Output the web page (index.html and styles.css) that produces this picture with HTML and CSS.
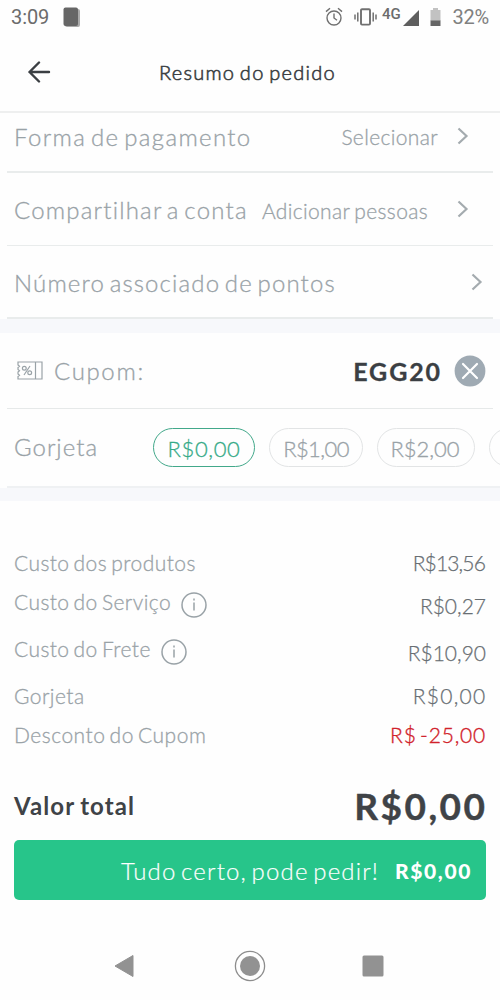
FILE: index.html
```html
<!DOCTYPE html>
<html lang="pt-BR">
<head>
<meta charset="utf-8">
<meta name="viewport" content="width=device-width, initial-scale=1">
<title>Resumo do pedido</title>
<link rel="stylesheet" href="styles.css">
</head>
<body>
<div class="status">
  <span class="clock">3:09</span>
  <svg class="card" width="18" height="21" viewBox="0 0 18 21"><rect x="2" y="2" width="15" height="18" rx="2" fill="#aaa"/><rect x="0.5" y="0.5" width="14.5" height="18.5" rx="2" fill="#666"/></svg>
  <svg class="alarm" width="18" height="20" viewBox="0 0 18 20" fill="none" stroke="#707070" stroke-width="1.4"><circle cx="9" cy="11" r="7"/><path d="M9 6.5V11l3 2.3M1 4.6 5 1.2M17 4.6 13 1.2"/></svg>
  <svg class="vibrate" width="23" height="18" viewBox="0 0 23 18" fill="none" stroke="#707070" stroke-width="1.5"><rect x="7" y="1.2" width="9" height="15.4" rx="1" stroke-width="1.9"/><path d="M1 6.5v5M3.8 4.5v9M19.2 4.5v9M22 6.5v5"/></svg>
  <span class="network">4G</span>
  <svg class="signal" width="16" height="16" viewBox="0 0 16 16"><path d="M16 0v16H0z" fill="#5e5e5e"/></svg>
  <svg class="battery" width="11" height="18" viewBox="0 0 11 18"><path d="M3 0h5v2h2.500v11H.5V2H3z" fill="#c2c2c2"/><path d="M.5 12.500h10V18H.5z" fill="#666"/></svg>
  <span class="percent">32%</span>
</div>
<header class="header">
  <svg class="back" width="23" height="22" viewBox="0 0 23 22" fill="none" stroke="#3b3f43" stroke-width="2.400" stroke-linecap="round" stroke-linejoin="round"><path d="M21 11H1.500M11 1.500 1.500 11l9.500 9.500"/></svg>
  <h1 class="title">Resumo do pedido</h1>
</header>
<main>
  <section class="options">
    <div class="option option-pay"><span class="name n-pay">Forma de pagamento</span><span class="hint h-pay">Selecionar</span><svg class="chev" width="12" height="18" viewBox="0 0 12 18"><path d="M1.500 1.500 9.500 9l-8 7.500"/></svg></div>
    <div class="option option-share"><span class="name n-share">Compartilhar a conta</span><span class="hint h-share">Adicionar pessoas</span><svg class="chev" width="12" height="18" viewBox="0 0 12 18"><path d="M1.500 1.500 9.500 9l-8 7.500"/></svg></div>
    <div class="option option-points"><span class="name n-points">Número associado de pontos</span><svg class="chev chev-end" width="12" height="18" viewBox="0 0 12 18"><path d="M1.500 1.500 9.500 9l-8 7.500"/></svg></div>
  </section>
  <div class="band"></div>
  <section class="coupon">
    <svg class="ticket" width="26" height="19" viewBox="0 0 26 19" fill="none" stroke="#99a2a7" stroke-width="1.200"><path d="M1 1h24v17H1v-2.500l1.500-1.200L1 13v-2l1.500-1.200L1 8.500v-2l1.500-1.200L1 4zM18.500 1v17"/><circle cx="7.300" cy="7.300" r="1.900"/><circle cx="12.700" cy="11.700" r="1.900"/><path d="M13 5 7 14"/></svg>
    <span class="name n-coupon">Cupom:</span>
    <span class="code">EGG20</span>
    <svg class="remove" width="32" height="32" viewBox="0 0 32 32"><circle cx="16" cy="16" r="15.400" fill="#9faab3"/><path d="m9 9 14 14M23 9 9 23" fill="none" stroke="#fff" stroke-width="2.200" stroke-linecap="round"/></svg>
  </section>
  <section class="tip">
    <span class="name n-tip">Gorjeta</span>
    <div class="pills"><span class="pill pill-on">R$0,00</span><span class="pill pill-one">R$1,00</span><span class="pill pill-two">R$2,00</span><span class="pill pill-more"></span></div>
  </section>
  <div class="band band-low"></div>
  <section class="costs">
    <div class="cost"><span class="label l-prod">Custo dos produtos</span><span class="value v-prod">R$13,56</span></div>
    <div class="cost cost-serv"><span class="label l-serv">Custo do Serviço</span><svg class="info" width="26" height="26" viewBox="0 0 26 26"><circle cx="13" cy="13" r="12"/><path d="M13 10.500v8M13 6.500v2"/></svg><span class="value v-serv">R$0,27</span></div>
    <div class="cost cost-ship"><span class="label l-ship">Custo do Frete</span><svg class="info" width="26" height="26" viewBox="0 0 26 26"><circle cx="13" cy="13" r="12"/><path d="M13 10.500v8M13 6.500v2"/></svg><span class="value v-ship">R$10,90</span></div>
    <div class="cost cost-tip"><span class="label l-tip">Gorjeta</span><span class="value v-tip">R$0,00</span></div>
    <div class="cost cost-off"><span class="label l-off">Desconto do Cupom</span><span class="value v-off">R$ -25,00</span></div>
  </section>
  <div class="total"><span class="total-label">Valor total</span><span class="total-value">R$0,00</span></div>
  <button class="order"><span class="order-text">Tudo certo, pode pedir!</span><span class="order-value">R$0,00</span></button>
</main>
<nav class="nav">
  <svg width="20" height="24" viewBox="0 0 20 24"><path d="M19 1.500v21L1 12z" fill="#929292" stroke="#929292" stroke-linejoin="round"/></svg>
  <svg class="home" width="32" height="32" viewBox="0 0 32 32"><circle cx="16" cy="16" r="14.600" fill="none" stroke="#8d8d8d" stroke-width="1.300"/><circle cx="16" cy="16" r="10" fill="#929292"/></svg>
  <svg width="22" height="22" viewBox="0 0 22 22"><rect x=".5" y=".5" width="21" height="21" rx="1.500" fill="#929292"/></svg>
</nav>
</body>
</html>
```

FILE: styles.css
```css
* { box-sizing: border-box; }
body { margin: 0; width: 500px; height: 1000px; overflow: hidden; background: #fefefe; font-family: Lato, "Open Sans", sans-serif; font-weight: 300; color: #99a2a7; white-space: nowrap; }
svg { display: block; flex: none; }
.status { height: 34px; display: flex; align-items: center; padding: 0 11px; font: 400 20px Roboto, sans-serif; color: #6c6c6c; }
.clock { width: 53px; letter-spacing: -.1px; }
.alarm { margin-left: 244px; }
.vibrate { margin-left: 11px; }
.network { margin: -7px 0 0 5px; font-size: 15px; font-weight: 500; width: 21px; }
.signal { margin-left: 1px; margin-top: 1px; }
.battery { margin-left: 11px; }
.percent { margin-left: 11px; letter-spacing: -.2px; color: #808080; }
.header { height: 79px; display: flex; align-items: center; padding: 0 28px 2px; border-bottom: 2px solid #eeefef; }
.title { margin: 0 0 0 108px; font-size: 20px; font-weight: 300; letter-spacing: 1.250px; word-spacing: -2px; color: #3b3f43; -webkit-text-stroke: .6px #3b3f43; }
.options { padding: 0 7px; }
.option { display: flex; align-items: center; padding: 0 24px 0 7px; border-bottom: 2px solid #e9ecec; }
.option-pay { height: 60px; padding-bottom: 12px; }
.option-share { height: 73px; border-bottom-width: 1px; }
.option-points { height: 73px; padding-right: 10px; }
.name, .hint, .label, .pill { -webkit-text-stroke: .3px currentColor; }
.name { font-size: 24px; letter-spacing: 1.250px; word-spacing: -3px; }
.n-pay { letter-spacing: 1.350px; }
.n-share { letter-spacing: 1.200px; }
.n-points { letter-spacing: 1.140px; padding-top: 2px; }
.hint { font-size: 21px; margin-left: auto; letter-spacing: .35px; }
.h-share { padding-top: 2px; word-spacing: -1.500px; }
.chev { margin-left: 19px; fill: none; stroke: #a4abaf; stroke-width: 2.200; }
.h-share + .chev { margin-left: 29px; }
.chev-end { margin-left: auto; }
.band { height: 14px; background: #f7f8fb; }
.coupon { height: 76px; margin: 0 7px; padding: 0 7px 0 10px; display: flex; align-items: center; border-bottom: 1px solid #e6e9e9; }
.n-coupon { margin-left: 11px; letter-spacing: 1.650px; }
.code { margin-left: auto; font-size: 25px; font-weight: 700; letter-spacing: 1.900px; color: #3b3f43; -webkit-text-stroke: .3px currentColor; }
.remove { margin-left: 12px; }
.tip { height: 79px; margin-left: 7px; padding-left: 7px; display: flex; align-items: center; border-bottom: 2px solid #eff1f3; overflow: hidden; }
.n-tip { padding-bottom: 3px; letter-spacing: 1px; }
.pills { display: flex; gap: 14px; margin-left: auto; width: 347px; }
.pill { flex: none; height: 39px; padding-top: 2px; border: 1px solid #e2e4e5; border-radius: 20px; display: flex; align-items: center; justify-content: center; font-size: 22px; }
.pill-on { width: 102px; border: 1.500px solid #42a88a; color: #35aa87; letter-spacing: .6px; }
.pill-one { width: 94px; letter-spacing: -.6px; }
.pill-two { width: 98px; padding-right: 2px; }
.pill-more { width: 96px; }
.band-low { height: 13px; }
.costs { padding: 42px 14px 0; }
.cost { display: flex; align-items: center; height: 39px; font-size: 21px; }
.label { letter-spacing: .430px; word-spacing: -2px; }
.l-tip { letter-spacing: .45px; }
.l-off { letter-spacing: .5px; }
.value { margin-left: auto; color: #686e73; -webkit-text-stroke: .25px currentColor; }
.v-prod { letter-spacing: -.85px; margin-right: 1px; }
.v-tip { letter-spacing: 1.300px; margin-right: -.5px; }
.info { fill: none; stroke: #99a2a7; stroke-width: 1.500; margin: -2px 0 0 10px; }
.cost-serv, .cost-ship { height: 47px; }
.l-serv, .l-ship { margin-top: -8px; }
.cost-tip { height: 40px; padding-bottom: 2px; }
.cost-off { padding-bottom: 2px; }
.v-off { color: #d1222b; letter-spacing: .8px; word-spacing: -3px; -webkit-text-stroke: .35px currentColor; }
.total { display: flex; align-items: center; justify-content: space-between; height: 66px; margin-top: 17px; padding: 0 14px; color: #3f4347; font-weight: 700; }
.total-label { font-size: 24px; letter-spacing: 1.100px; word-spacing: -1.500px; }
.total-value { font-size: 37px; letter-spacing: 2.500px; margin-right: -1.500px; -webkit-text-stroke: .4px currentColor; }
.order { display: flex; align-items: center; justify-content: flex-end; margin: 2px 14px 0; width: 472px; height: 60px; padding: 0 14px 0 15px; border: 0; border-radius: 5px; background: #27c58a; color: #fff; font-family: inherit; }
.order-text { font-size: 24px; font-weight: 300; letter-spacing: 1.150px; word-spacing: -3px; -webkit-text-stroke: .2px currentColor; }
.order-value { margin-left: 16px; font-size: 21px; font-weight: 900; letter-spacing: 1.600px; }
.nav { display: flex; align-items: center; justify-content: space-between; padding: 0 116px 0 114px; margin-top: 50px; height: 32px; }
.home { margin-left: 3px; }
```
